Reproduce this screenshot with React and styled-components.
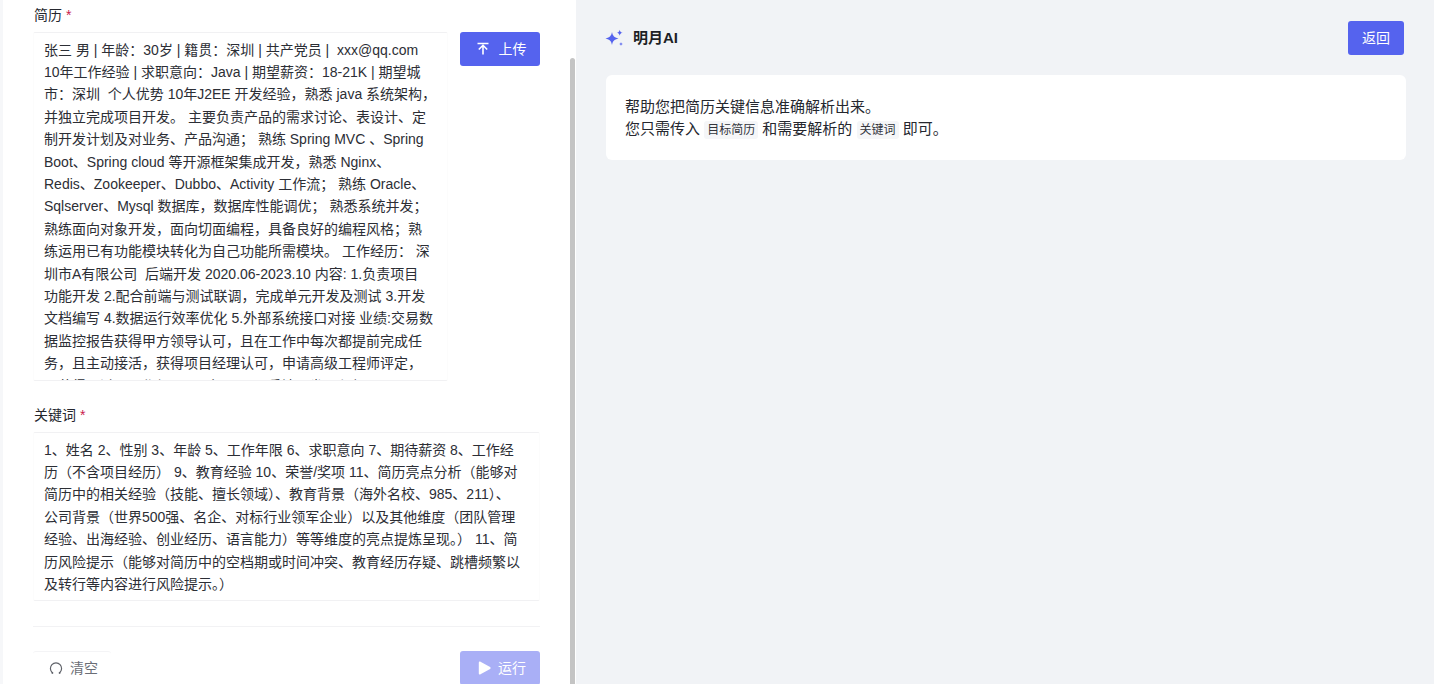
import React from "react";
import styled, { createGlobalStyle } from "styled-components";

const Global = createGlobalStyle`
  html, body { margin: 0; padding: 0; height: 100%; overflow: hidden; }
  body { font-family: "Liberation Sans", "Noto Sans CJK SC", sans-serif; color: #25272e; background: #f1f3f6; }
  #root { height: 684px; }
  * { box-sizing: border-box; }
`;

const Page = styled.div`
  display: flex;
  height: 684px;
  overflow: hidden;
`;
const LeftPanel = styled.section`
  position: relative;
  flex: 0 0 576px;
  background: #fff;
  border-left: 3px solid #f6f7f9;
  padding: 0 36px 0 30px;
  overflow: hidden;
`;
const ScrollThumb = styled.div`
  position: absolute;
  left: 567px;
  top: 58px;
  bottom: 0;
  width: 5px;
  background: #c4c4c4;
  border-radius: 3px 3px 0 0;
`;
const Label = styled.label`
  display: block;
  height: 32px;
  padding: 5px 0 0 1px;
  font-size: 14px;
  line-height: 20px;
  color: #25272e;
  & > b {
    font-weight: 400;
    color: #c9204c;
    margin-left: 4px;
  }
`;
const UploadRow = styled.div`
  display: flex;
  gap: 12px;
  align-items: flex-start;
`;
const TextBox = styled.div`
  flex: 1;
  min-width: 0;
  height: ${(p) => p.$height}px;
  overflow: hidden;
  border-top: 1px solid #f1f1f3;
  border-bottom: 1px solid #f1f1f3;
  border-left: 1px solid #fcfcfc;
  border-right: 1px solid #fcfcfc;
  border-radius: 2px;
  padding: 5.5px 0 0 10px;
  font-size: 14px;
  line-height: 22.4px;
  color: #2c2e35;
`;
const Line = styled.div`
  white-space: pre;
`;
const Button = styled.button`
  flex: none;
  display: inline-flex;
  align-items: center;
  justify-content: center;
  gap: ${(p) => p.$gap || 0}px;
  width: ${(p) => p.$width}px;
  height: 34px;
  padding: 0 0 0 ${(p) => p.$shift || 0}px;
  border: none;
  border-radius: 3px;
  background: ${(p) => (p.$disabled ? "#a9aff6" : "#5563ee")};
  color: #fff;
  font-family: inherit;
  font-size: 14px;
  line-height: 20px;
`;
const KeywordSection = styled.div`
  margin-top: 19px;
`;
const Divider = styled.div`
  margin-top: 25px;
  height: 1px;
  background: #f2f2f4;
`;
const Footer = styled.div`
  margin-top: 24px;
  display: flex;
  justify-content: space-between;
  align-items: flex-start;
`;
const ClearButton = styled.button`
  display: inline-flex;
  align-items: center;
  gap: 7px;
  width: 78px;
  height: 33px;
  padding: 0 0 0 16px;
  background: #fff;
  border: none;
  border-top: 1px solid #f4f4f6;
  border-radius: 3px;
  color: #6b6e76;
  font-family: inherit;
  font-size: 14px;
  line-height: 20px;
`;
const RightPanel = styled.section`
  flex: 1;
  padding: 21px 28px 0 30px;
  background: #f1f3f6;
`;
const Header = styled.header`
  display: flex;
  align-items: center;
  justify-content: space-between;
  height: 34px;
  padding-right: 2px;
`;
const Brand = styled.div`
  display: flex;
  align-items: center;
  gap: 8px;
  margin-left: -1px;
  font-size: 15px;
  font-weight: 600;
  line-height: 20px;
  color: #1d1f26;
`;
const Card = styled.div`
  margin-top: 20px;
  height: 85px;
  padding: 21px 19px;
  background: #fff;
  border-radius: 6px;
  font-size: 15px;
  line-height: 22px;
  color: #25272e;
`;
const Tag = styled.code`
  font-family: inherit;
  font-size: 12px;
  background: #f5f6f8;
  border-radius: 3px;
  padding: 2px 3px;
  color: #33353c;
`;

const resume = [
  "张三 男 | 年龄：30岁 | 籍贯：深圳 | 共产党员 |  xxx@qq.com",
  "10年工作经验 | 求职意向：Java | 期望薪资：18-21K | 期望城",
  "市：深圳  个人优势 10年J2EE 开发经验，熟悉 java 系统架构，",
  "并独立完成项目开发。 主要负责产品的需求讨论、表设计、定",
  "制开发计划及对业务、产品沟通； 熟练 Spring MVC 、Spring",
  "Boot、Spring cloud 等开源框架集成开发，熟悉 Nginx、",
  "Redis、Zookeeper、Dubbo、Activity 工作流； 熟练 Oracle、",
  "Sqlserver、Mysql 数据库，数据库性能调优； 熟悉系统并发；",
  "熟练面向对象开发，面向切面编程，具备良好的编程风格；熟",
  "练运用已有功能模块转化为自己功能所需模块。 工作经历： 深",
  "圳市A有限公司  后端开发 2020.06-2023.10 内容: 1.负责项目",
  "功能开发 2.配合前端与测试联调，完成单元开发及测试 3.开发",
  "文档编写 4.数据运行效率优化 5.外部系统接口对接 业绩:交易数",
  "据监控报告获得甲方领导认可，且在工作中每次都提前完成任",
  "务，且主动接活，获得项目经理认可，申请高级工程师评定，",
  "且获得通过。工作经历：B有限公司 后端开发工程师",
];
const keywords = [
  "1、姓名 2、性别 3、年龄 5、工作年限 6、求职意向 7、期待薪资 8、工作经",
  "历（不含项目经历） 9、教育经验 10、荣誉/奖项 11、简历亮点分析（能够对",
  "简历中的相关经验（技能、擅长领域）、教育背景（海外名校、985、211）、",
  "公司背景（世界500强、名企、对标行业领军企业）以及其他维度（团队管理",
  "经验、出海经验、创业经历、语言能力）等等维度的亮点提炼呈现。） 11、简",
  "历风险提示（能够对简历中的空档期或时间冲突、教育经历存疑、跳槽频繁以",
  "及转行等内容进行风险提示。）",
];

const UploadIcon = () => (
  <svg width="14" height="14" viewBox="0 0 14 14" fill="none" stroke="#fff" strokeWidth="1.6">
    <path d="M1.500 1.500h11M7 12.500V3.800M2.800 7.500 7 3.300l4.200 4.200" />
  </svg>
);
const PlayIcon = () => (
  <svg width="13" height="14" viewBox="0 0 13 14" fill="#fff">
    <path d="M.8 1.600c0-.9 1-1.400 1.700-.9l9.600 5.400c.7.400.7 1.400 0 1.800l-9.600 5.400c-.7.500-1.700 0-1.700-.9z" />
  </svg>
);
const ClearIcon = () => (
  <svg width="14" height="14" viewBox="0 0 14 14" fill="none" stroke="#5f6269" strokeWidth="1.2" strokeLinecap="round">
    <path d="M3.400 11.800A5.600 5.600 0 1 1 10.600 11.800" />
    <path d="M10.600 11.900v-.1M3.400 11.900v-.1" strokeWidth="1.800" />
  </svg>
);
const SparkIcon = () => (
  <svg width="20" height="20" viewBox="0 0 20 20" fill="#5563ee">
    <path d="M7 4c.7 3.600 2 5.500 6.500 6.500-4.500 1-5.800 2.900-6.500 6.500-.7-3.600-2-5.500-6.500-6.500C5 9.500 6.300 7.600 7 4z" />
    <path d="M14.700 1.700c.4 1.900 1 2.600 3 3-2 .4-2.600 1.100-3 3-.4-1.900-1-2.600-3-3 2-.4 2.600-1.100 3-3z" />
    <path d="M16 14c.2 1.300.7 1.800 2 2-1.300.2-1.800.7-2 2-.2-1.300-.7-1.800-2-2 1.300-.2 1.800-.7 2-2z" />
  </svg>
);

export default function App() {
  return (
    <Page>
      <Global />
      <LeftPanel>
        <Label>简历<b>*</b></Label>
        <UploadRow>
          <TextBox $height={349}>
            {resume.map((l) => <Line key={l}>{l}</Line>)}
          </TextBox>
          <Button $width={80} $gap={9} $shift={2}><UploadIcon />上传</Button>
        </UploadRow>
        <KeywordSection>
          <Label>关键词<b>*</b></Label>
          <TextBox $height={169}>
            {keywords.map((l) => <Line key={l}>{l}</Line>)}
          </TextBox>
        </KeywordSection>
        <Divider />
        <Footer>
          <ClearButton><ClearIcon />清空</ClearButton>
          <Button $width={80} $gap={7} $shift={4} $disabled><PlayIcon />运行</Button>
        </Footer>
        <ScrollThumb />
      </LeftPanel>
      <RightPanel>
        <Header>
          <Brand><SparkIcon />明月AI</Brand>
          <Button $width={56}>返回</Button>
        </Header>
        <Card>
          帮助您把简历关键信息准确解析出来。<br />
          您只需传入 <Tag>目标简历</Tag> 和需要解析的 <Tag>关键词</Tag> 即可。
        </Card>
      </RightPanel>
    </Page>
  );
}
